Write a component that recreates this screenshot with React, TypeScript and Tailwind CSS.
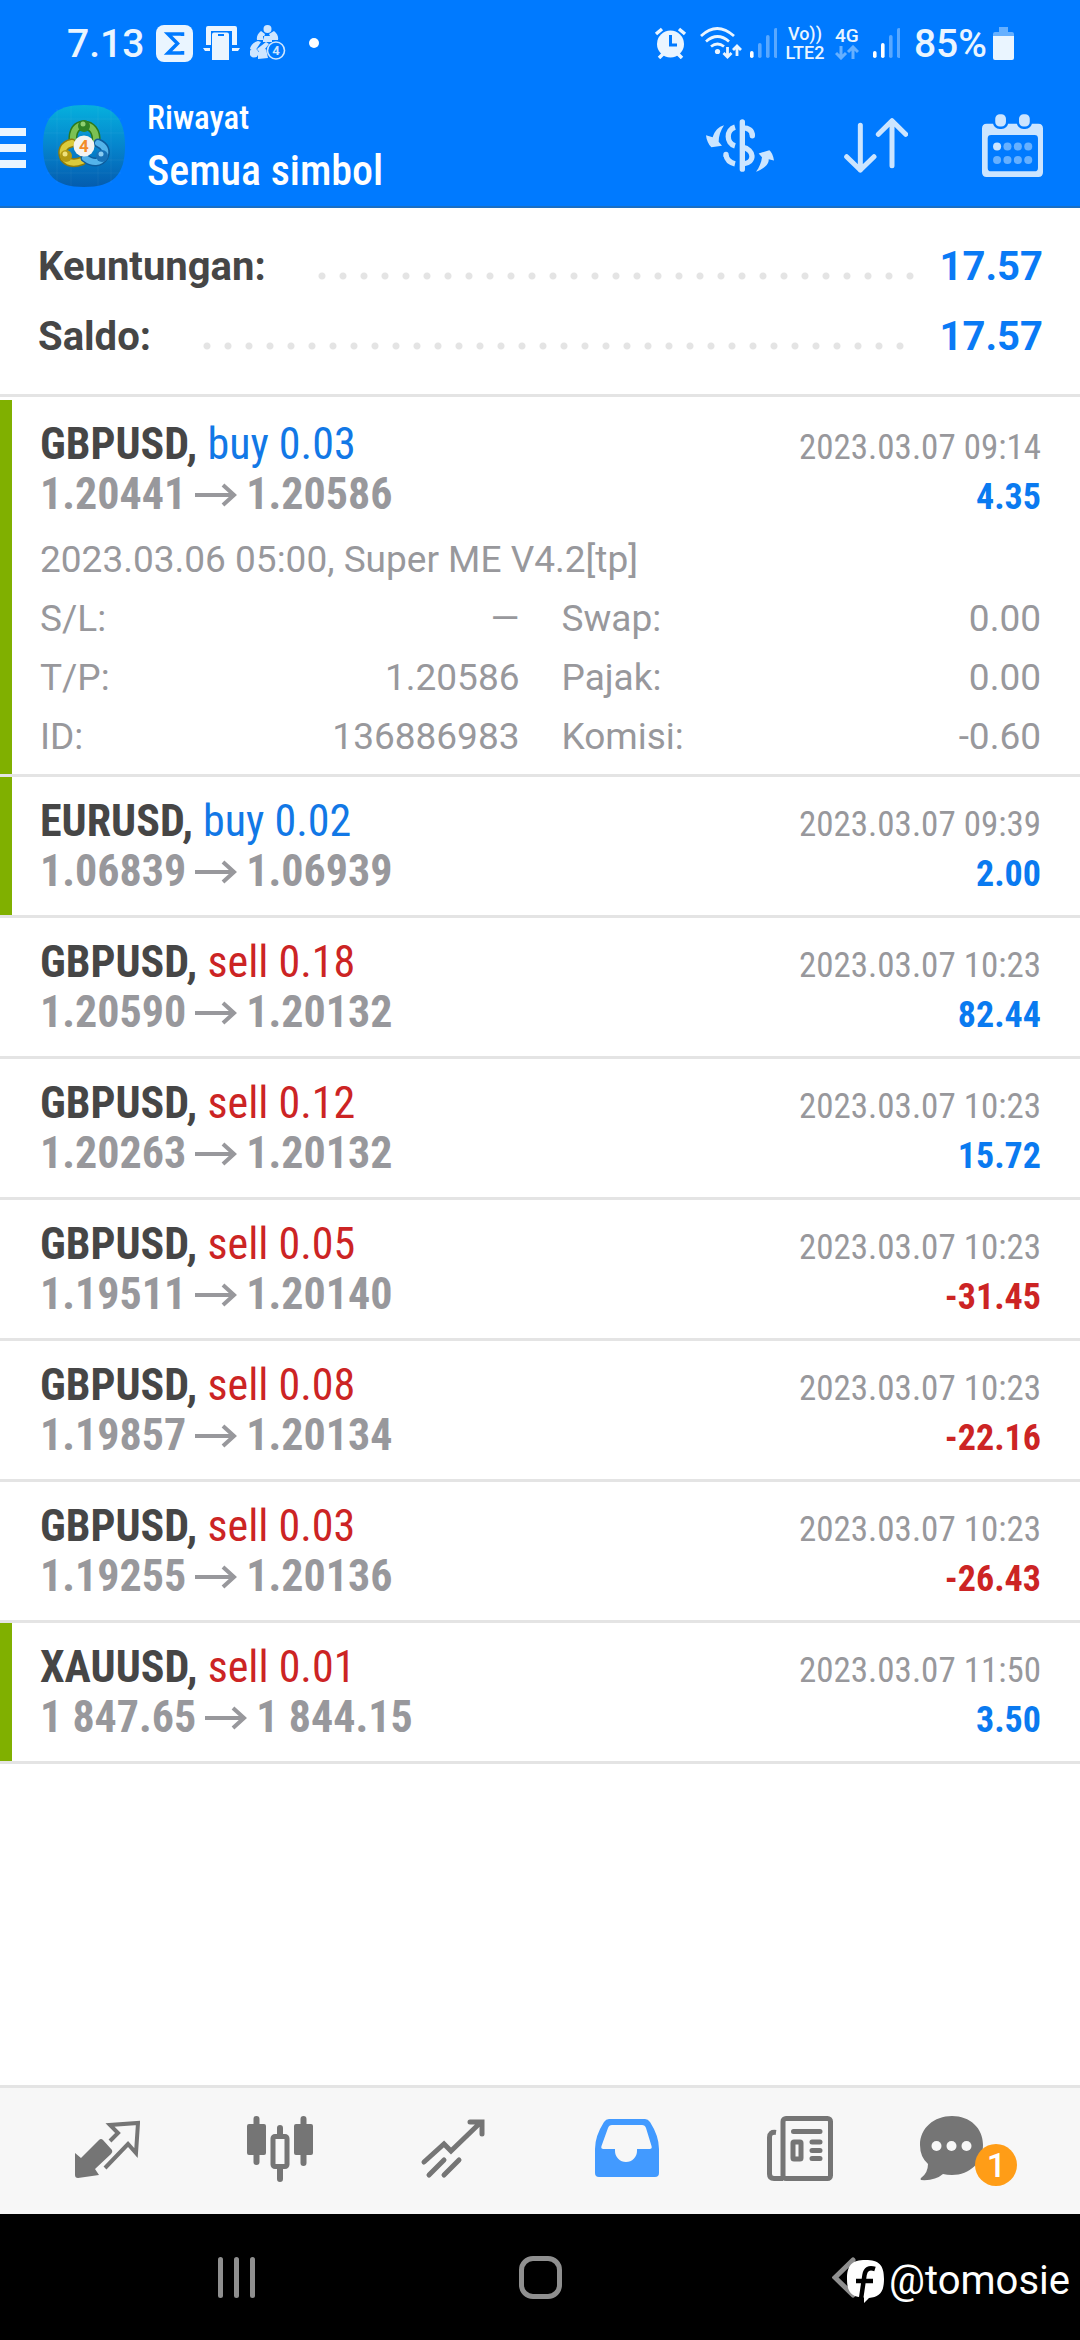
import type { ReactNode } from "react";

const deals = [
  {
    id: 1,
    symbol: "GBPUSD",
    side: "buy",
    lot: "0.03",
    from: "1.20441",
    to: "1.20586",
    time: "2023.03.07 09:14",
    profit: "4.35",
    tp: true,
    note: "2023.03.06 05:00, Super ME V4.2[tp]",
    details: [
      ["S/L:", "—", "Swap:", "0.00"],
      ["T/P:", "1.20586", "Pajak:", "0.00"],
      ["ID:", "136886983", "Komisi:", "-0.60"],
    ],
  },
  { id: 2, symbol: "EURUSD", side: "buy", lot: "0.02", from: "1.06839", to: "1.06939", time: "2023.03.07 09:39", profit: "2.00", tp: true },
  { id: 3, symbol: "GBPUSD", side: "sell", lot: "0.18", from: "1.20590", to: "1.20132", time: "2023.03.07 10:23", profit: "82.44" },
  { id: 4, symbol: "GBPUSD", side: "sell", lot: "0.12", from: "1.20263", to: "1.20132", time: "2023.03.07 10:23", profit: "15.72" },
  { id: 5, symbol: "GBPUSD", side: "sell", lot: "0.05", from: "1.19511", to: "1.20140", time: "2023.03.07 10:23", profit: "-31.45" },
  { id: 6, symbol: "GBPUSD", side: "sell", lot: "0.08", from: "1.19857", to: "1.20134", time: "2023.03.07 10:23", profit: "-22.16" },
  { id: 7, symbol: "GBPUSD", side: "sell", lot: "0.03", from: "1.19255", to: "1.20136", time: "2023.03.07 10:23", profit: "-26.43" },
  { id: 8, symbol: "XAUUSD", side: "sell", lot: "0.01", from: "1 847.65", to: "1 844.15", time: "2023.03.07 11:50", profit: "3.50", tp: true },
];

const condensed = "font-['Roboto_Condensed',Roboto,sans-serif]";

const Signal = ({ level }: { level: number }) => (
  <svg viewBox="0 0 27 30" className="h-[30px] w-[27px]" fill="#fff">
    {[7, 15, 23, 30].map((h, i) => (
      <rect key={h} x={i * 8} y={30 - h} width="3.6" height={h} rx="1.8" opacity={i < level ? 1 : 0.35} />
    ))}
  </svg>
);

const StatusBar = () => (
  <div className="flex h-[86px] items-center justify-between pr-[66px] pl-[67px] text-[#eaf5ff]">
    <div className="flex items-center">
      <span className="w-[89px] pt-[2px] text-[39px] leading-[40px] font-medium">7.13</span>
      <svg viewBox="0 0 37 37" className="size-[37px]">
        <rect width="37" height="37" rx="8" fill="#eaf5ff" />
        <path d="M26.500 11V9H12l9.500 9.500L12 28h14.500v-2" fill="none" stroke="#007aff" strokeWidth="3.500" />
      </svg>
      <svg viewBox="0 0 37 34" className="ml-[10px] h-[34px] w-[37px]" fill="#eaf5ff">
        <path d="M5 0h27a2 2 0 0 1 2 2v17h-5V5H8v14H3V2a2 2 0 0 1 2-2zM0 22h7v3H2zM29 22h8l-2 3h-6z" />
        <path d="M11 6.500h13q2 0 2 2V34H9V8.500q0-2 2-2zm4 1.500v2h6V8z" fillRule="evenodd" />
      </svg>
      <svg viewBox="0 0 36 36" className="ml-[10px] size-9">
        <g fill="#cfe6ff">
          <circle cx="17.500" cy="4" r="4" />
          <path d="M11 6q-5 4-4 9h6l2-6zM24 6q5 4 4 9h-6l-3-6zM13 11h9v6h-9zM8 16q-7 2-8 8l5 2 6-9zM7 24l9-7 3 2-8 10zM8 27l8-3 2 9-10 1z" />
          <circle cx="4" cy="28" r="4.500" />
        </g>
        <circle cx="26" cy="25.500" r="8.500" fill="#007aff" stroke="#cfe6ff" strokeWidth="1.600" />
        <text x="26" y="30" textAnchor="middle" fontSize="13" fontWeight="700" fill="#cfe6ff">4</text>
      </svg>
      <span className="ml-[23px] size-[10px] rounded-full bg-white" />
    </div>

    <div className="flex items-center">
      <svg viewBox="0 0 33 32" className="h-8 w-[33px]">
        <path d="M2 7 8 2M31 7l-6-5M5 31l5-5M28 31l-5-5" stroke="#eaf5ff" strokeWidth="3.500" />
        <circle cx="16.500" cy="17" r="13.500" fill="#eaf5ff" />
        <path d="M16.500 8v10h6.500" fill="none" stroke="#007aff" strokeWidth="3" />
      </svg>
      <svg viewBox="0 0 42 32" className="ml-[13px] h-8 w-[42px]" fill="none" stroke="#eaf5ff" strokeWidth="2.800">
        <path d="M1 9q16-15 33 0M6 14.500q11.500-10 23 0M11 19.500q6.500-5 13 0" />
        <circle cx="17.500" cy="24.500" r="2.600" fill="#eaf5ff" stroke="none" />
        <path d="M27.500 20v9M23.500 26l4 4 4-4M37 29v-9M33 23l4-4 4 4" />
      </svg>
      <span className="ml-2">
        <Signal level={1} />
      </span>
      <span className="ml-2 flex w-[40px] flex-col items-center text-[18px] leading-[19px] font-medium">
        <span>Vo))</span>
        <span>LTE2</span>
      </span>
      <span className="ml-[10px] flex flex-col items-center text-[19px] leading-[19px] font-medium">
        4G
        <svg viewBox="0 0 24 15" className="h-[15px] w-6" fill="none" stroke="#66b0ff" strokeWidth="3">
          <path d="M6 1v11M1 8l5 5 5-5M18 14V3M13 7l5-5 5 5" />
        </svg>
      </span>
      <span className="ml-[14px]">
        <Signal level={2} />
      </span>
      <span className="ml-[14px] pt-[2px] text-[39px] leading-[40px] font-medium">85%</span>
      <svg viewBox="0 0 21 33" className="ml-[6px] h-[33px] w-[21px]">
        <path d="M6 0h9v5h4q2 0 2 2v3H0V7q0-2 2-2h4z" fill="#66b0ff" />
        <path d="M0 9h21v22q0 2-2 2H2q-2 0-2-2z" fill="#eaf5ff" />
      </svg>
    </div>
  </div>
);

const AppLogo = () => (
  <svg viewBox="0 0 82 82" className="size-[82px]">
    <defs>
      <linearGradient id="tile" x1="0" y1="0" x2="0" y2="1">
        <stop offset="0" stopColor="#06b0dd" />
        <stop offset="0.500" stopColor="#0585cd" />
        <stop offset="1" stopColor="#045cae" />
      </linearGradient>
    </defs>
    <path d="M41 0C70 0 82 12 82 41S70 82 41 82 0 70 0 41 12 0 41 0z" fill="url(#tile)" />
    <path d="M14 4v74M28 1v80M55 1v80M68 4v74M4 14h74M1 28h80M1 55h80M4 68h74" stroke="#fff" strokeOpacity="0.050" />
    <g fill="none" strokeLinecap="round">
      <path d="M30 37C29 25 34 20 41 20s13 6 12 17" stroke="#2c7a1c" strokeWidth="9" />
      <path d="M30 37C29 25 34 20 41 20s13 6 12 17" stroke="#7cc153" strokeWidth="6" />
      <path d="M29 38C20 40 18 46 21 53c4 5 10 6 18 3" stroke="#8f7c0c" strokeWidth="9" />
      <path d="M29 38C20 40 18 46 21 53c4 5 10 6 18 3" stroke="#dccb3c" strokeWidth="6" />
      <path d="M55 38c7 3 9 8 6 14-4 6-11 7-19 1" stroke="#0d5c9c" strokeWidth="9" />
      <path d="M55 38c7 3 9 8 6 14-4 6-11 7-19 1" stroke="#54b3ea" strokeWidth="6" />
    </g>
    <circle cx="41" cy="21" r="6" fill="#2f8426" />
    <circle cx="40" cy="19" r="2.500" fill="#8fd070" />
    <circle cx="23" cy="51" r="6" fill="#b39a14" />
    <circle cx="22" cy="49" r="2.500" fill="#efe27c" />
    <circle cx="59" cy="51" r="6" fill="#1872b8" />
    <circle cx="58" cy="49" r="2.500" fill="#8accf2" />
    <circle cx="41" cy="41" r="10.500" fill="#f3f3f1" />
    <text x="41" y="47" textAnchor="middle" fontSize="17" fontWeight="700" fill="#f28c28">4</text>
  </svg>
);

const Header = () => (
  <header className="border-b-2 border-[#1a6fc4] bg-[#007aff] text-white">
    <StatusBar />
    <div className="flex h-[120px] items-start pr-[37px]">
      <button aria-label="Menu" className="mt-[42px] flex w-[26px] flex-col gap-2">
        <span className="h-2 w-full bg-[#eaf5ff]" />
        <span className="h-2 w-full bg-[#eaf5ff]" />
        <span className="h-2 w-full bg-[#eaf5ff]" />
      </button>
      <div className="mt-[19px] ml-[17px]">
        <AppLogo />
      </div>
      <div className={`${condensed} mt-[10px] ml-[22px] flex-1 font-medium`}>
        <p className="text-[33px] leading-[44px]">Riwayat</p>
        <h1 className="text-[42px] leading-[62px]">Semua simbol</h1>
      </div>
      <div className="mt-[27px] flex h-[64px] items-center">
        <button aria-label="Simbol">
          <svg viewBox="0 0 204 158" className="h-[53px] w-[68px]" fill="none" stroke="#cce5ff" strokeWidth="16">
            <path d="M54 18C38 22 26 34 20 54L0 48C1 62 8 76 16 84L48 80 38 68C38 50 44 34 54 18z" fill="#cce5ff" stroke="none" />
            <path d="M150 158C168 150 190 138 188 120L204 124C202 108 196 98 190 93L158 103 168 114C166 130 160 144 150 158z" fill="#cce5ff" stroke="none" />
            <path d="M87 24C60 32 60 72 87 80M60 108C62 122 70 130 87 134M109 26C128 26 138 34 139 48" />
            <path d="M60 106v2M139 48v2M109 8v142" strokeLinecap="round" />
            <path d="M109 84C146 92 148 130 112 134" />
          </svg>
        </button>
        <button aria-label="Urutkan" className="ml-[70px]">
          <svg viewBox="0 0 192 165" className="h-[55px] w-[64px]" fill="none" stroke="#cce5ff" strokeWidth="15" strokeLinecap="round" strokeLinejoin="round">
            <path d="M49 22v134M8 116l41 40 41-40M144 143V8M103 49l41-41 41 41" />
          </svg>
        </button>
        <button aria-label="Kalender" className="ml-[74px]">
          <svg viewBox="0 0 182 188" className="h-[63px] w-[61px]">
            <path d="M14 29h154q14 0 14 14v131q0 14-14 14H14q-14 0-14-14V43q0-14 14-14zM27 63q-10 0-10 10v88q0 10 10 10h130q10 0 10-10V73q0-10-10-10z" fill="#cce5ff" fillRule="evenodd" />
            <g fill="#cce5ff" stroke="#007aff" strokeWidth="7">
              <rect x="36" y="-3" width="39" height="44" rx="17" />
              <rect x="107" y="-3" width="39" height="44" rx="17" />
            </g>
            {[97, 137].map((y) =>
              [45, 76, 107, 138].map((x) => (
                <circle key={`${x}-${y}`} cx={x} cy={y} r="12" fill={x === 45 && y === 97 ? "#cce5ff" : "#66b0ff"} />
              ))
            )}
          </svg>
        </button>
      </div>
    </div>
  </header>
);

const SummaryRow = ({ label, value }: { label: string; value: string }) => (
  <div className="flex h-[70px] items-center text-[40px] leading-[70px] font-bold">
    <dt className="text-[#464646]">{label}</dt>
    <span className="mt-[18px] mr-[25px] ml-[52px] h-2 flex-1 bg-[radial-gradient(circle_at_4px_4px,#e4e4e4_3px,transparent_4px)] bg-[length:21px_8px] bg-repeat-x" />
    <dd className="text-[#0a7af5]">{value}</dd>
  </div>
);

const Deal = ({ deal }: any) => (
  <li className={`border-b-[3px] border-[#e4e4e4] ${condensed}`}>
    <div className={`border-l-[12px] pt-[19px] pr-[39px] pl-[28px] ${deal.tp ? "border-[#80b000]" : "border-transparent"}`}>
      <div className="flex h-[50px] items-baseline justify-between text-[44px] leading-[50px]">
        <p>
          <span className="font-bold text-[#464646]">{deal.symbol},</span>{" "}
          <span className={deal.side === "buy" ? "text-[#1278e6]" : "text-[#cc2424]"}>
            {deal.side} {deal.lot}
          </span>
        </p>
        <p className="text-[35px] text-[#98989c]">{deal.time}</p>
      </div>
      <div className="flex h-[50px] items-baseline justify-between text-[44px] leading-[50px] font-bold">
        <p className="text-[#98989c]">
          {deal.from}
          <svg viewBox="0 0 42 24" className="mx-[9px] mb-1 inline h-6 w-[42px]" fill="none" stroke="currentColor" strokeWidth="4">
            <path d="M0 12h39M28 2l11 10-11 10" />
          </svg>
          {deal.to}
        </p>
        <p className={`text-[36px] ${deal.profit.startsWith("-") ? "text-[#cc2424]" : "text-[#0a7af0]"}`}>{deal.profit}</p>
      </div>
      {deal.details ? (
        <div className="mt-[11px] pb-2 font-[Roboto,sans-serif] text-[37px] leading-[59px] text-[#98989c]">
          <p>{deal.note}</p>
          <dl>
            {deal.details.map((d: string[]) => (
              <div key={d[0]} className="grid grid-cols-2 gap-x-[42px]">
                <div className="flex justify-between">
                  <dt>{d[0]}</dt>
                  <dd>{d[1]}</dd>
                </div>
                <div className="flex justify-between">
                  <dt>{d[2]}</dt>
                  <dd>{d[3]}</dd>
                </div>
              </div>
            ))}
          </dl>
        </div>
      ) : (
        <div className="h-[19px]" />
      )}
    </div>
  </li>
);

const Tab = ({ label, children }: { label: string; children: ReactNode }) => (
  <a href="#" aria-label={label} className="relative flex flex-1 justify-center">
    {children}
  </a>
);

const TabBar = () => (
  <nav className="flex h-[129px] items-start border-t-[3px] border-[#e4e4e4] bg-[#f7f7f7] px-[20px] pt-[28px] text-[#757575]">
    <Tab label="Kuotasi">
      <svg viewBox="0 0 66 66" className="size-[66px]">
        <path d="M1 37 7 42 25 24q2-2 4 0l9 10q1 2-1 4L21 53l4 6L4 62q-3 0-3-3z" fill="currentColor" />
        <path d="M36 25 44 17 36 9 64 7 62 37 54 28 31 52" fill="none" stroke="currentColor" strokeWidth="4" />
      </svg>
    </Tab>
    <Tab label="Grafik">
      <svg viewBox="0 0 66 66" className="size-[66px]" fill="none" stroke="currentColor">
        <path d="M9.500 3v43M56.500 3v44M33 12v12M33 50v13" strokeWidth="6" strokeLinecap="round" />
        <path d="M2 8h15q2 0 2 2v27q0 2-2 2H2q-2 0-2-2V10q0-2 2-2zM49 8h15q2 0 2 2v27q0 2-2 2H49q-2 0-2-2V10q0-2 2-2z" fill="currentColor" stroke="none" />
        <rect x="26" y="20.500" width="14" height="30" rx="2" strokeWidth="5" fill="#f7f7f7" />
      </svg>
    </Tab>
    <Tab label="Trading">
      <svg viewBox="0 0 66 66" className="size-[66px]" fill="none" stroke="currentColor" strokeWidth="5" strokeLinecap="round">
        <path d="M4 46 24 28l7 7L60 7M50 6h12v12M9 59l15-15M24 59l15-15" />
      </svg>
    </Tab>
    <Tab label="Riwayat">
      <svg viewBox="0 0 66 66" className="size-[66px]">
        <path d="M15 3h36q3 0 5 3 9 14 9 27v24q0 4-4 4H5q-4 0-4-4V33Q1 20 10 6q2-3 5-3zm3 6q-3 0-4 3L7.500 30q-1 3 2 3H21v2a11 11 0 0 0 22 0v-2h12.500q3 0 2-3L52 12q-1-3-4-3z" fill="#429aff" fillRule="evenodd" />
      </svg>
    </Tab>
    <Tab label="Berita">
      <svg viewBox="0 0 66 66" className="size-[66px]" fill="none" stroke="currentColor" strokeWidth="5">
        <rect x="16" y="2.500" width="47.500" height="60" rx="3" />
        <path d="M9 16.500q-6.500-1-6.500 5V58q0 4.500 4.500 4.500h9" />
        <path d="M26.500 15.500H53M45 26h8M45 34.500h8M45 42.500h8" strokeLinecap="round" />
        <rect x="26" y="26" width="8" height="17" rx="1" />
      </svg>
    </Tab>
    <Tab label="Pesan">
      <span className="relative mr-[42px]">
        <svg viewBox="0 0 66 66" className="size-[66px]">
          <path d="M33 0C51 0 64 12 64 29S51 59 33 59q-5 0-9-1-8 7-22 6-1-1 0-2 7-5 7-14Q1 41 1 29C1 12 15 0 33 0z" fill="currentColor" />
          <g fill="#f7f7f7">
            <circle cx="17.500" cy="30" r="5" />
            <circle cx="32.500" cy="30" r="5" />
            <circle cx="47.500" cy="30" r="5" />
          </g>
        </svg>
        <span className="absolute top-[28px] left-[56px] flex size-[42px] items-center justify-center rounded-full bg-[#ff9d17] text-[34px] leading-[42px] font-medium text-white">
          1
        </span>
      </span>
    </Tab>
  </nav>
);

const SystemBar = () => (
  <div className="relative flex h-[126px] items-center bg-black px-[84px]">
    <button aria-label="Terbaru" className="flex flex-1 justify-center gap-[11px]">
      <span className="h-[41px] w-[5px] rounded-full bg-[#8f8f8f]" />
      <span className="h-[41px] w-[5px] rounded-full bg-[#8f8f8f]" />
      <span className="h-[41px] w-[5px] rounded-full bg-[#8f8f8f]" />
    </button>
    <button aria-label="Beranda" className="flex flex-1 justify-center">
      <span className="size-[43px] rounded-[14px] border-[5px] border-[#8f8f8f]" />
    </button>
    <button aria-label="Kembali" className="flex flex-1 justify-center">
      <svg viewBox="0 0 24 41" className="h-[41px] w-6" fill="none" stroke="#8f8f8f" strokeWidth="5" strokeLinecap="round">
        <path d="M21 3 3 20.500 21 38" />
      </svg>
    </button>
    <div className="absolute top-[43px] right-[10px] flex items-center gap-[5px] text-white">
      <svg viewBox="0 0 37 43" className="h-[43px] w-[37px]">
        <path d="M18.500 0C32 0 37 5 37 19S32 37 22 38L17 43V37.500C5 37 0 33 0 19S5 0 18.500 0z" fill="#fff" />
        <path d="M28 9Q19 6 17.500 15L14 39M9 21h17" fill="none" stroke="#000" strokeWidth="4.500" />
      </svg>
      <span className="text-[40px] leading-[48px]">@tomosie</span>
    </div>
  </div>
);

export default function App() {
  return (
    <div className="flex min-h-screen flex-col bg-white font-[Roboto,sans-serif]">
      <Header />
      <main className="flex-1">
        <dl className="border-b-[3px] border-[#e4e4e4] pt-[24px] pr-[37px] pb-[22px] pl-[38px]">
          <SummaryRow label="Keuntungan:" value="17.57" />
          <SummaryRow label="Saldo:" value="17.57" />
        </dl>
        <ul className="pt-[3px]">
          {deals.map((deal) => (
            <Deal key={deal.id} deal={deal} />
          ))}
        </ul>
      </main>
      <TabBar />
      <SystemBar />
    </div>
  );
}
